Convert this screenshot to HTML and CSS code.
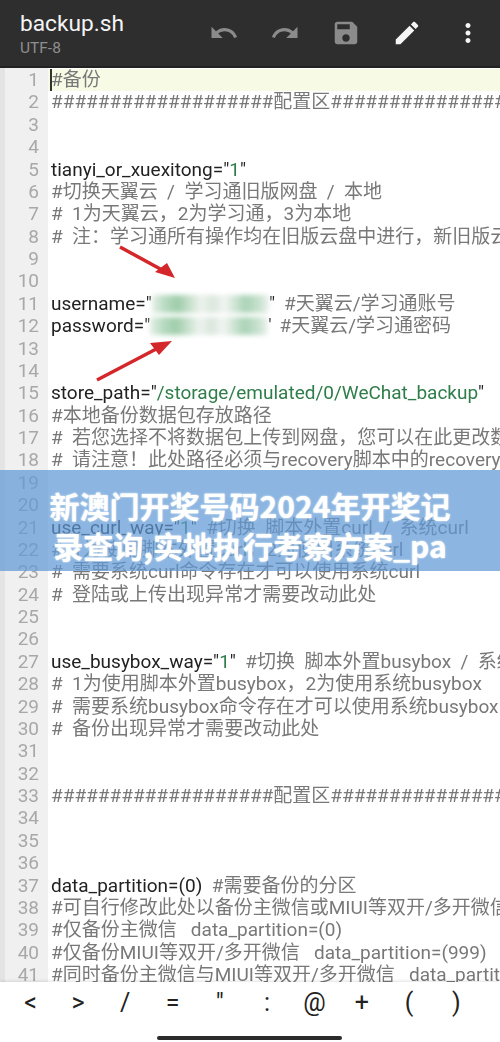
FILE: index.html
```html
<!DOCTYPE html>
<html lang="zh">
<head>
<meta charset="utf-8">
<title>backup.sh</title>
<link rel="stylesheet" href="styles.css">
</head>
<body>
<div class="app">
  <header class="toolbar">
    <div class="title">
      <div class="name">backup.sh</div>
      <div class="enc">UTF-8</div>
    </div>
    <div class="actions">
      <svg class="icon dim" viewBox="0 0 24 24"><path d="M12.5 8c-2.65 0-5.05.99-6.9 2.6L2 7v9h9l-3.62-3.62c1.39-1.16 3.16-1.88 5.12-1.88 3.54 0 6.55 2.31 7.6 5.5l2.37-.78C21.08 11.03 17.15 8 12.5 8z"/></svg>
      <svg class="icon dim" viewBox="0 0 24 24"><path d="M18.4 10.6C16.55 8.99 14.15 8 11.5 8c-4.65 0-8.58 3.03-9.96 7.22L3.9 16c1.05-3.19 4.05-5.5 7.6-5.5 1.95 0 3.73.72 5.12 1.88L13 16h9V7l-3.6 3.6z"/></svg>
      <svg class="icon dim" viewBox="0 0 24 24"><path d="M17 3H5c-1.11 0-2 .9-2 2v14c0 1.1.89 2 2 2h14c1.1 0 2-.9 2-2V7l-4-4zm-5 16c-1.66 0-3-1.34-3-3s1.34-3 3-3 3 1.34 3 3-1.34 3-3 3zm3-10H5V5h10v4z"/></svg>
      <svg class="icon" viewBox="0 0 24 24"><path d="M3 17.25V21h3.75L17.81 9.94l-3.75-3.75L3 17.25zM20.71 7.04c.39-.39.39-1.02 0-1.41l-2.34-2.34c-.39-.39-1.02-.39-1.41 0l-1.83 1.83 3.75 3.75 1.83-1.83z"/></svg>
      <svg class="icon" viewBox="0 0 24 24"><path d="M12 8c1.1 0 2-.9 2-2s-.9-2-2-2-2 .9-2 2 .9 2 2 2zm0 2c-1.1 0-2 .9-2 2s.9 2 2 2 2-.9 2-2-.9-2-2-2zm0 6c-1.1 0-2 .9-2 2s.9 2 2 2 2-.9 2-2-.9-2-2-2z"/></svg>
    </div>
  </header>

  <main class="editor">
    <div class="row current"><span class="num">1</span><span class="code cmt"><span class="caret"></span>#备份</span></div>
    <div class="row"><span class="num">2</span><span class="code cmt">###################配置区##########################</span></div>
    <div class="row"><span class="num">3</span><span class="code"></span></div>
    <div class="row"><span class="num">4</span><span class="code"></span></div>
    <div class="row"><span class="num">5</span><span class="code">tianyi_or_xuexitong="<span class="str">1</span>"</span></div>
    <div class="row"><span class="num">6</span><span class="code cmt">#切换天翼云  /  学习通旧版网盘  /  本地</span></div>
    <div class="row"><span class="num">7</span><span class="code cmt">#  1为天翼云，2为学习通，3为本地</span></div>
    <div class="row"><span class="num">8</span><span class="code cmt">#  注：学习通所有操作均在旧版云盘中进行，新旧版云盘数据不互通</span></div>
    <div class="row"><span class="num">9</span><span class="code"></span></div>
    <div class="row"><span class="num">10</span><span class="code"></span></div>
    <div class="row"><span class="num">11</span><span class="code">username="<span class="mask m1"></span>"<span class="cmt gap1">#天翼云/学习通账号</span></span></div>
    <div class="row"><span class="num">12</span><span class="code">password="<span class="mask m2"></span>'<span class="cmt gap2">#天翼云/学习通密码</span></span></div>
    <div class="row"><span class="num">13</span><span class="code"></span></div>
    <div class="row"><span class="num">14</span><span class="code"></span></div>
    <div class="row"><span class="num">15</span><span class="code">store_path="<span class="str">/storage/emulated/0/WeChat_backup</span>"</span></div>
    <div class="row"><span class="num">16</span><span class="code cmt">#本地备份数据包存放路径</span></div>
    <div class="row"><span class="num">17</span><span class="code cmt">#  若您选择不将数据包上传到网盘，您可以在此更改数据包存放路径</span></div>
    <div class="row"><span class="num">18</span><span class="code cmt">#  请注意！此处路径必须与recovery脚本中的recovery_path一致</span></div>
    <div class="row"><span class="num">19</span><span class="code"></span></div>
    <div class="row"><span class="num">20</span><span class="code"></span></div>
    <div class="row"><span class="num">21</span><span class="code">use_curl_way="<span class="str">1</span>"  <span class="cmt">#切换  脚本外置curl  /  系统curl</span></span></div>
    <div class="row"><span class="num">22</span><span class="code cmt">#  1为使用脚本外置curl，2为使用系统curl</span></div>
    <div class="row"><span class="num">23</span><span class="code cmt">#  需要系统curl命令存在才可以使用系统curl</span></div>
    <div class="row"><span class="num">24</span><span class="code cmt">#  登陆或上传出现异常才需要改动此处</span></div>
    <div class="row"><span class="num">25</span><span class="code"></span></div>
    <div class="row"><span class="num">26</span><span class="code"></span></div>
    <div class="row"><span class="num">27</span><span class="code">use_busybox_way="<span class="str">1</span>"  <span class="cmt">#切换  脚本外置busybox  /  系统busybox</span></span></div>
    <div class="row"><span class="num">28</span><span class="code cmt">#  1为使用脚本外置busybox，2为使用系统busybox</span></div>
    <div class="row"><span class="num">29</span><span class="code cmt">#  需要系统busybox命令存在才可以使用系统busybox</span></div>
    <div class="row"><span class="num">30</span><span class="code cmt">#  备份出现异常才需要改动此处</span></div>
    <div class="row"><span class="num">31</span><span class="code"></span></div>
    <div class="row"><span class="num">32</span><span class="code"></span></div>
    <div class="row"><span class="num">33</span><span class="code cmt">###################配置区##########################</span></div>
    <div class="row"><span class="num">34</span><span class="code"></span></div>
    <div class="row"><span class="num">35</span><span class="code"></span></div>
    <div class="row"><span class="num">36</span><span class="code"></span></div>
    <div class="row"><span class="num">37</span><span class="code">data_partition=(0)  <span class="cmt">#需要备份的分区</span></span></div>
    <div class="row"><span class="num">38</span><span class="code cmt">#可自行修改此处以备份主微信或MIUI等双开/多开微信数据</span></div>
    <div class="row"><span class="num">39</span><span class="code cmt">#仅备份主微信   data_partition=(0)</span></div>
    <div class="row"><span class="num">40</span><span class="code cmt">#仅备份MIUI等双开/多开微信   data_partition=(999)</span></div>
    <div class="row"><span class="num">41</span><span class="code cmt">#同时备份主微信与MIUI等双开/多开微信   data_partition=(0 999)</span></div>
  </main>

  <footer class="keys">
    <div class="symbols">
      <span>&lt;</span><span>&gt;</span><span>/</span><span>=</span><span>"</span><span>:</span><span>@</span><span>+</span><span>(</span><span>)</span>
    </div>
    <div class="home"></div>
  </footer>

  <svg class="arrows" viewBox="0 0 500 1042">
    <path class="arrow" d="M120 247 L164 271"/>
    <path class="head" d="M175 278 L155 272 L167 263 Z"/>
    <path class="arrow" d="M97 380 L160 347"/>
    <path class="head" d="M172 341 L159 355 L150 343 Z"/>
  </svg>

  <div class="banner">
    <h1>新澳门开奖号码2024年开奖记录查询,实地执行考察方案_pa</h1>
  </div>
</div>
</body>
</html>
```

FILE: styles.css
```css
* { box-sizing: border-box; }
html, body { margin: 0; padding: 0; }
body { background: #fff; font-family: Roboto, "Noto Sans CJK SC", sans-serif; }
.app { position: relative; width: 500px; height: 1042px; overflow: hidden; display: flex; flex-direction: column; }

.toolbar { flex: none; height: 68px; background: #2e2e2e; border-bottom: 2px solid #222; display: flex; align-items: flex-start; justify-content: space-between; }
.title { padding: 9px 0 0 20px; }
.name { color: #f4f4f4; font-size: 22.7px; line-height: 30px; }
.enc { color: #8e8e8e; font-size: 15.5px; line-height: 18px; margin-top: 0; }
.actions { display: flex; gap: 31px; padding: 18px 17px 0 0; }
.icon { width: 30px; height: 30px; fill: #f5f5f5; display: block; }
.icon.dim { fill: #8b8b8b; }

.editor { flex: 1; min-height: 0; overflow: hidden; background: linear-gradient(to right, #e4e4e4 0, #e4e4e4 5px, #f0f0f0 5px, #f0f0f0 48px, #fff 48px); padding-top: 1px; filter: blur(0.35px); }
.row { display: flex; height: 22.38px; line-height: 22.38px; font-size: 19px; white-space: pre; }
.num { flex: none; width: 39px; text-align: right; color: #a8a8a8; font-size: 19px; }
.code { position: relative; margin-left: 12px; color: #222; }
.cmt { color: #787878; }
.str { color: #2f7d4a; }
.row.current { background: linear-gradient(to right, transparent 48px, #f7fbe6 48px); }
.caret { position: absolute; left: -1px; top: 0; width: 1.5px; height: 22px; background: #333; }
.mask { display: inline-block; height: 18px; vertical-align: -3px; filter: blur(2.5px); background: linear-gradient(to right, #e4efe6 0, #b5d9bf 12%, #9fcdaa 22%, #eef3ef 42%, #d9e6dc 52%, #f2f5f2 62%, #aad3b6 80%, #c9e2d0 92%, #eef3ef 100%); }
.m1 { width: 117px; }
.m2 { width: 118px; }
.gap1 { margin-left: 9px; }
.gap2 { margin-left: 8px; }

.keys { flex: none; height: 60px; background: #fff; display: flex; flex-direction: column; position: relative; box-shadow: 0 -1px 3px rgba(0,0,0,.12); }
.symbols { display: grid; grid-template-columns: repeat(10, 47.3px); padding: 6px 0 0 7px; font-size: 25px; line-height: 30px; color: #222; text-align: center; }
.home { position: absolute; left: 157px; bottom: 2px; width: 185px; height: 4px; border-radius: 2px; background: #2b2b2b; }

.arrows { position: absolute; inset: 0; width: 500px; height: 1042px; pointer-events: none; }
.arrow { stroke: #d3272b; stroke-width: 3.5px; fill: none; }
.head { fill: #d3272b; }

.banner { position: absolute; left: 0; top: 470px; width: 500px; height: 101px; padding: 15px 40px 0; background: rgba(96, 154, 214, 0.72); }
.banner h1 { margin: 0; color: #fff; font-family: "Noto Sans CJK SC", sans-serif; font-size: 30px; font-weight: 700; line-height: 40px; text-align: center; text-shadow: 0 0 2px #fff; }
```
